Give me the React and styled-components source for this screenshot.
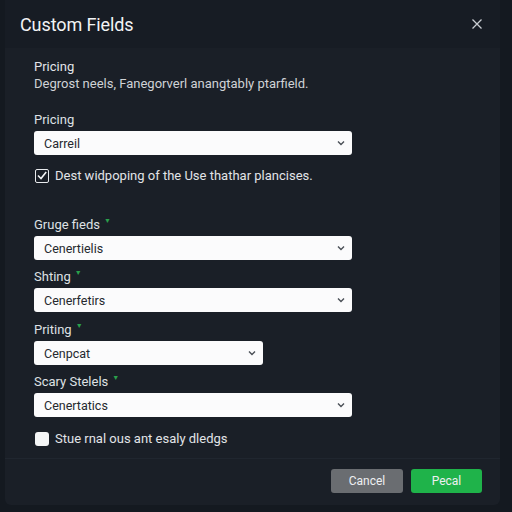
import React from "react";
import styled, { createGlobalStyle } from "styled-components";

const Global = createGlobalStyle`
  html, body { margin: 0; padding: 0; background: #141920; }
  body { font-family: Roboto, "Liberation Sans", Arial, sans-serif; width: 512px; height: 512px; overflow: hidden; }
`;

const Dialog = styled.div`
  width: 495px;
  height: 505px;
  margin-left: 5px;
  background: #1a1f27;
  border-radius: 0 0 6px 6px;
  display: flex;
  flex-direction: column;
  box-sizing: border-box;
`;

const Header = styled.div`
  height: 48px;
  flex: none;
  display: flex;
  align-items: center;
  justify-content: space-between;
  padding: 0 17px 0 15px;
  background: #171c24;
  box-sizing: border-box;
`;

const Title = styled.h1`
  margin: 0;
  font-size: 18px;
  font-weight: 400;
  color: #f2f3f5;
  letter-spacing: -0.1px;
`;

const Close = styled.button`
  background: none;
  border: none;
  padding: 0;
  width: 12px;
  height: 12px;
  display: flex;
  color: #c9cdd2;
`;

const Body = styled.div`
  flex: 1;
  padding: 10px 0 0 29px;
  display: flex;
  flex-direction: column;
`;

const Text = styled.div`
  font-size: 13px;
  line-height: 17px;
  color: ${(p) => p.$muted ? "#cfd2d6" : "#e2e4e7"};
  margin-top: ${(p) => p.$mt || 0}px;
`;

const Label = styled.div`
  font-size: 13px;
  line-height: 17px;
  color: #dfe1e4;
  margin-top: ${(p) => p.$mt || 0}px;
  display: flex;
  align-items: flex-start;
  gap: 4px;
`;

const Req = styled.span`
  color: #2aa14c;
  font-size: 7px;
  line-height: 10px;
`;

const Select = styled.div`
  margin-top: 3px;
  width: ${(p) => p.$w || 318}px;
  height: 24px;
  box-sizing: border-box;
  background: #fbfbfc;
  border-radius: 3px;
  display: flex;
  align-items: center;
  justify-content: space-between;
  padding: 0 7px 0 10px;
  font-size: 12.5px;
  color: #25292e;
`;

const CheckRow = styled.label`
  display: flex;
  align-items: center;
  gap: 6px;
  margin-top: ${(p) => p.$mt || 0}px;
  font-size: 13px;
  line-height: 17px;
  color: #e2e4e7;
  padding-left: 1px;
`;

const Box = styled.span`
  width: 14px;
  height: 14px;
  box-sizing: border-box;
  border-radius: ${(p) => (p.$checked ? 2 : 3)}px;
  border: ${(p) => (p.$checked ? "1.5px solid #e8eaed" : "none")};
  background: ${(p) => (p.$checked ? "transparent" : "#f4f5f6")};
  display: flex;
  align-items: center;
  justify-content: center;
`;

const Footer = styled.div`
  flex: none;
  height: 47px;
  border-top: 1px solid #20262f;
  display: flex;
  justify-content: flex-end;
  align-items: flex-start;
  gap: 8px;
  padding: 10px 18px 0 0;
  box-sizing: border-box;
`;

const Button = styled.button`
  width: ${(p) => p.$w}px;
  height: 24px;
  border: none;
  border-radius: 3px;
  font-family: inherit;
  font-size: 12px;
  color: #eef0f2;
  background: ${(p) => (p.$primary ? "#1fb34a" : "#6a6d71")};
`;

const Chevron = () => (
  <svg width="8" height="6" viewBox="0 0 8 6">
    <path d="M1 1.5 L4 4.5 L7 1.5" fill="none" stroke="#4a4f56" strokeWidth="1.4" />
  </svg>
);

const Field = ({ label, value, mt, w, req }) => (
  <>
    <Label $mt={mt}>
      {label}
      {req && <Req>▼</Req>}
    </Label>
    <Select $w={w}>
      <span>{value}</span>
      <Chevron />
    </Select>
  </>
);

export default function App() {
  return (
    <>
      <Global />
      <Dialog>
        <Header>
          <Title>Custom Fields</Title>
          <Close aria-label="Close">
            <svg width="12" height="12" viewBox="0 0 12 12">
              <path d="M1.5 1.5 L10.5 10.5 M10.5 1.5 L1.5 10.5" stroke="#c9cdd2" strokeWidth="1.3" />
            </svg>
          </Close>
        </Header>
        <Body>
          <Text>Pricing</Text>
          <Text $muted>Degrost neels, Fanegorverl anangtably ptarfield.</Text>
          <Field label="Pricing" value="Carreil" mt={19} />
          <CheckRow $mt={12}>
            <Box $checked>
              <svg width="10" height="9" viewBox="0 0 10 9">
                <path d="M1 4.5 L4 7.5 L9.2 1" fill="none" stroke="#f2f3f5" strokeWidth="1.6" />
              </svg>
            </Box>
            Dest widpoping of the Use thathar plancises.
          </CheckRow>
          <Field label="Gruge fieds" value="Cenertielis" mt={32} req />
          <Field label="Shting" value="Cenerfetirs" mt={8} req />
          <Field label="Priting" value="Cenpcat" mt={9} w={229} req />
          <Field label="Sсary Stelels" value="Cenertatics" mt={8} req />
          <CheckRow $mt={13}>
            <Box />
            Stue rnal ous ant esaly dledgs
          </CheckRow>
        </Body>
        <Footer>
          <Button $w={72}>Cancel</Button>
          <Button $w={71} $primary>Pecal</Button>
        </Footer>
      </Dialog>
    </>
  );
}
